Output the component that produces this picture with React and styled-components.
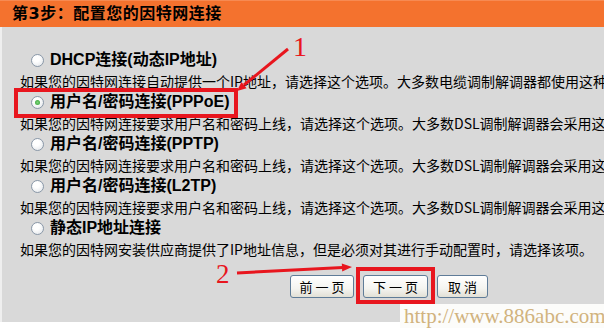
import React from "react";
import styled, { createGlobalStyle, css } from "styled-components";

const GlobalStyle = createGlobalStyle`
  html, body {
    margin: 0;
    padding: 0;
    background: #ffffff;
    overflow: hidden;
  }
`;

const options = [
  {
    id: "dhcp",
    label: "DHCP连接(动态IP地址)",
    desc: "如果您的因特网连接自动提供一个IP地址，请选择这个选项。大多数电缆调制解调器都使用这种类型的连接。",
  },
  {
    id: "pppoe",
    label: "用户名/密码连接(PPPoE)",
    desc: "如果您的因特网连接要求用户名和密码上线，请选择这个选项。大多数DSL调制解调器会采用这种类型的连接。",
    checked: true,
    marked: true,
  },
  {
    id: "pptp",
    label: "用户名/密码连接(PPTP)",
    desc: "如果您的因特网连接要求用户名和密码上线，请选择这个选项。大多数DSL调制解调器会采用这种类型的连接。",
  },
  {
    id: "l2tp",
    label: "用户名/密码连接(L2TP)",
    desc: "如果您的因特网连接要求用户名和密码上线，请选择这个选项。大多数DSL调制解调器会采用这种类型的连接。",
  },
  {
    id: "static",
    label: "静态IP地址连接",
    desc: "如果您的因特网安装供应商提供了IP地址信息，但是必须对其进行手动配置时，请选择该项。",
  },
];

function Wizard() {
  return (
    <Page>
      <Header>
        <Title>第3步：配置您的因特网连接</Title>
      </Header>
      <Content>
        {options.map((o) => (
          <Option key={o.id}>
            <LabelRow $marked={o.marked}>
              <Radio $checked={o.checked} />
              <Label>{o.label}</Label>
            </LabelRow>
            <Desc>{o.desc}</Desc>
          </Option>
        ))}
        <Buttons>
          <Button $w={64}>前一页</Button>
          <Marked>
            <Button $w={65}>下一页</Button>
          </Marked>
          <Button $w={51}>取消</Button>
        </Buttons>
      </Content>

      {/* hand-drawn annotations on top of the screenshot */}
      <Arrows width="604" height="328" viewBox="0 0 604 328">
        <line x1="288" y1="49" x2="244" y2="85" stroke="#e8161e" strokeWidth="3" />
        <polygon points="237,91 246.6,88.3 241.4,82.1" fill="#e8161e" />
        <line x1="237" y1="273" x2="343" y2="267.5" stroke="#e8161e" strokeWidth="3" />
        <polygon points="352,267 342.2,271.5 341.8,263.5" fill="#e8161e" />
      </Arrows>
      <Digit $x={293} $y={33} $size={28}>1</Digit>
      <Digit $x={216} $y={260} $size={27}>2</Digit>
      <Watermark>http://www.886abc.com</Watermark>
    </Page>
  );
}

const Page = styled.div`
  position: relative;
  width: 604px;
  height: 328px;
  overflow: hidden;
  background: #ffffff;
`;

const Header = styled.div`
  height: 27px;
  background: #f4722e;
  border-top: 1px solid #f78a52;
  box-sizing: border-box;
  display: flex;
  align-items: center;
  padding-left: 12px;
`;

const Title = styled.div`
  font-family: "DejaVu Sans", "Noto Sans CJK SC", sans-serif;
  font-size: 16px;
  font-weight: 700;
  letter-spacing: 0.5px;
  color: #000;
  line-height: 20px;
`;

const Content = styled.div`
  background: #d9d9d9;
  border-left: 2px solid #efefef;
  padding: 22px 0 24px;
`;

const Option = styled.div`
  display: flex;
  flex-direction: column;
`;

const LabelRow = styled.div`
  position: relative;
  height: 22px;
  display: flex;
  align-items: center;
  gap: 6px;
  padding-left: 29px;
  ${(p) =>
    p.$marked &&
    css`
      &::after {
        content: "";
        position: absolute;
        left: 12px;
        width: 224px;
        top: -3px;
        bottom: -5px;
        border: 4px solid #e8161e;
        box-sizing: border-box;
      }
    `}
`;

const Radio = styled.span`
  position: relative;
  width: 13px;
  height: 13px;
  border-radius: 50%;
  border: 1px solid #8a98a8;
  box-sizing: border-box;
  background: radial-gradient(circle at 40% 35%, #ffffff 30%, #dde1e6 100%);
  flex-shrink: 0;
  ${(p) =>
    p.$checked &&
    css`
      &::after {
        content: "";
        position: absolute;
        left: 3px;
        top: 3px;
        width: 5px;
        height: 5px;
        border-radius: 50%;
        background: radial-gradient(circle, #7cd67c 0%, #2f9a2f 100%);
      }
    `}
`;

const Label = styled.span`
  font-family: "Liberation Sans", "Noto Sans CJK SC", sans-serif;
  font-size: 16px;
  font-weight: 700;
  color: #000;
  white-space: nowrap;
  line-height: 22px;
`;

const Desc = styled.div`
  font-family: "Noto Sans CJK SC", sans-serif;
  font-size: 14px;
  line-height: 20px;
  color: #000;
  padding-left: 18px;
  white-space: nowrap;
  overflow: hidden;
`;

const Buttons = styled.div`
  display: flex;
  gap: 9px;
  padding-left: 288px;
  margin-top: 16px;
`;

const Button = styled.button`
  width: ${(p) => p.$w}px;
  height: 23px;
  padding: 0;
  border: 1px solid #5f7c98;
  border-radius: 3px;
  background: linear-gradient(#ffffff 0%, #f4f4f0 60%, #e2e0d6 100%);
  font-family: "Noto Sans CJK SC", sans-serif;
  font-size: 13px;
  letter-spacing: 3px;
  text-indent: 3px;
  color: #000;
  cursor: pointer;
`;

const Marked = styled.span`
  position: relative;
  display: inline-flex;
  &::after {
    content: "";
    position: absolute;
    left: -7px;
    right: -7px;
    top: -8px;
    bottom: -6px;
    border: 4px solid #e8161e;
    box-sizing: border-box;
  }
`;

const Arrows = styled.svg`
  position: absolute;
  left: 0;
  top: 0;
  pointer-events: none;
`;

const Digit = styled.div`
  position: absolute;
  left: ${(p) => p.$x}px;
  top: ${(p) => p.$y}px;
  font-family: "Liberation Serif", serif;
  font-size: ${(p) => p.$size}px;
  line-height: 28px;
  color: #e8161e;
`;

const Watermark = styled.div`
  position: absolute;
  right: 0;
  bottom: 0;
  width: 204px;
  height: 24px;
  box-sizing: border-box;
  padding-left: 4px;
  background: #fcfcfa;
  font-family: "Liberation Serif", serif;
  font-size: 21px;
  line-height: 24px;
  color: #d1b37e;
  white-space: nowrap;
`;

export default function App() {
  return (
    <>
      <GlobalStyle />
      <Wizard />
    </>
  );
}
